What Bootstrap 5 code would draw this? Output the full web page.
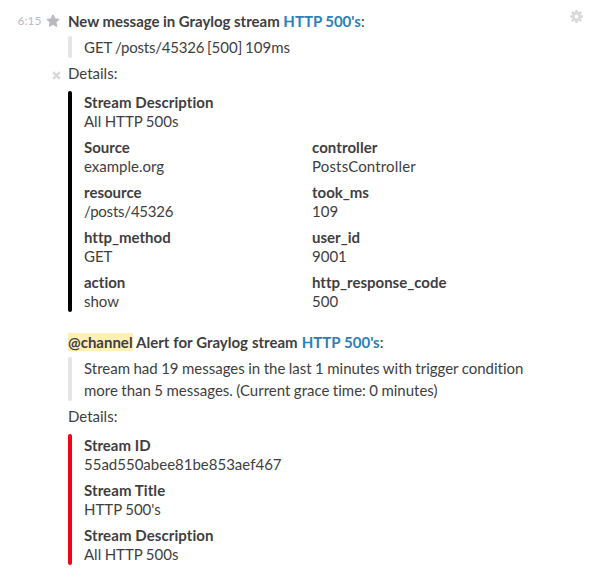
<!DOCTYPE html>
<html lang="en">
<head>
<meta charset="utf-8">
<meta name="viewport" content="width=device-width, initial-scale=1">
<title>Graylog stream messages</title>
<link rel="stylesheet" href="https://cdn.jsdelivr.net/npm/bootstrap@5.3.0/dist/css/bootstrap.min.css">
<style>
body { font: 15px/22px Lato, sans-serif; font-variant-ligatures: none; color: #3f3e42; background: #fff; overflow: hidden; }
.gutter { width: 68px; }
.gutter-top { height: 22px; padding-right: 8.5px; }
.stamp { font-size: 12px; color: #babbbf; margin-right: 4px; }
.collapse-x { margin: 39px 7px 0 auto; }
.message { padding-top: 10px; }
.stream-link { color: #2a80b9; font-weight: 700; }
.mention { background: #fff0b8; }
.bar { width: 4px; border-radius: 4px; flex: none; }
.bar-quote { background: #e3e4e6; }
.bar-black { background: #000; }
.bar-red { background: #f90018; }
.quote { gap: 12px; margin: 4px 0; word-spacing: -.4px; }
.tight { word-spacing: -1px; }
.headline { word-spacing: -.2px; }
.alert-message .headline { word-spacing: .25px; }
.attachment { gap: 12px; margin-top: 7px; line-height: 19px; }
.fields { padding: 2px 0 1px; row-gap: 7px; }
.fields div > div { word-spacing: -.4px; }
.fields .path-text, .path-text { letter-spacing: -.22px; }
.wide-text { letter-spacing: .16px; }
.title-wide { letter-spacing: .08px; }
.field-half { width: 228px; }
.alert-message { margin-top: 19px; }
.settings { margin: 10px 7.5px 0 0; }
strong { font-weight: 700; }
</style>
<script src="https://cdn.jsdelivr.net/npm/bootstrap@5.3.0/dist/js/bootstrap.bundle.min.js"></script>
</head>
<body>
<div class="d-flex align-items-start">
  <aside class="gutter flex-shrink-0 message">
    <div class="gutter-top d-flex align-items-center justify-content-end">
      <span class="stamp">6:15</span>
      <svg width="14" height="14" viewBox="0 0 13 13" fill="#babbbf" stroke="#babbbf" stroke-linejoin="round"><path d="M6.500 1 8.200 4.400l3.800.5-2.800 2.600.7 3.900-3.400-1.900-3.400 1.900.7-3.900L1 4.900l3.800-.5z"/></svg>
    </div>
    <svg class="collapse-x d-block" width="9" height="9" viewBox="0 0 9 9" stroke="#d9d9db" stroke-width="2.400"><path d="M1.200 1.200l6.600 6.600M7.800 1.200L1.200 7.800"/></svg>
  </aside>
  <main class="flex-grow-1">
    <section class="message">
      <div class="headline"><strong>New message in Graylog stream</strong> <a class="stream-link text-decoration-none" href="#">HTTP 500's</a>:</div>
      <div class="quote d-flex"><span class="bar bar-quote"></span><div class="tight">GET <span class="path-text">/posts/45326</span> [500] 109ms</div></div>
      <div>Details:</div>
      <div class="attachment d-flex">
        <span class="bar bar-black"></span>
        <div class="fields d-flex flex-wrap flex-grow-1">
          <div class="w-100"><strong class="title-wide">Stream Description</strong><div>All HTTP 500s</div></div>
          <div class="field-half"><strong>Source</strong><div>example.org</div></div>
          <div class="field-half"><strong class="title-wide">controller</strong><div class="wide-text">PostsController</div></div>
          <div class="field-half"><strong>resource</strong><div class="path-text">/posts/45326</div></div>
          <div class="field-half"><strong>took_ms</strong><div>109</div></div>
          <div class="field-half"><strong>http_method</strong><div>GET</div></div>
          <div class="field-half"><strong>user_id</strong><div>9001</div></div>
          <div class="field-half"><strong>action</strong><div>show</div></div>
          <div class="field-half"><strong>http_response_code</strong><div>500</div></div>
        </div>
      </div>
    </section>
    <section class="alert-message">
      <div class="headline"><strong><span class="mention">@channel</span> Alert for Graylog stream</strong> <a class="stream-link text-decoration-none" href="#">HTTP 500's</a>:</div>
      <div class="quote d-flex"><span class="bar bar-quote"></span><div>Stream had 19 messages in the last 1 minutes with trigger condition<br>more than 5 messages. (Current grace time: 0 minutes)</div></div>
      <div>Details:</div>
      <div class="attachment d-flex">
        <span class="bar bar-red"></span>
        <div class="fields d-flex flex-column">
          <div><strong>Stream ID</strong><div>55ad550abee81be853aef467</div></div>
          <div><strong class="title-wide">Stream Title</strong><div>HTTP 500's</div></div>
          <div><strong class="title-wide">Stream Description</strong><div>All HTTP 500s</div></div>
        </div>
      </div>
    </section>
  </main>
  <svg class="settings flex-shrink-0" width="13" height="13" viewBox="0 0 13 13" fill="none" stroke="#d9d9db"><circle cx="6.500" cy="6.500" r="3.200" stroke-width="2.600"/><path stroke-width="2.600" d="M6.500 0v2.800M6.500 10.200V13M0 6.500h2.800M10.200 6.500H13M1.900 1.900l2 2M9.100 9.100l2 2M11.100 1.900l-2 2M3.900 9.100l-2 2"/></svg>
</div>
</body>
</html>
